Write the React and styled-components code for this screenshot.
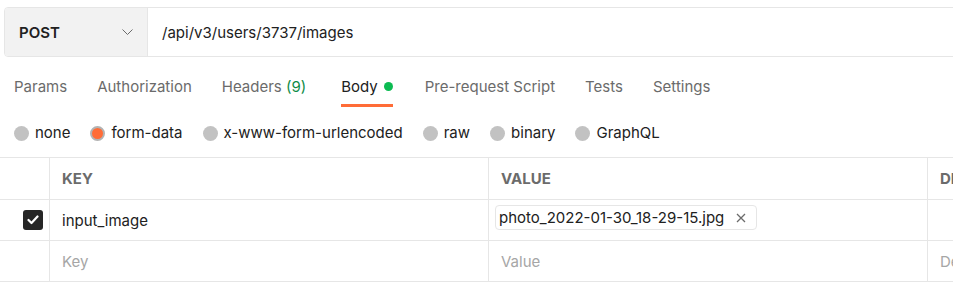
import React from 'react';
import styled, { createGlobalStyle } from 'styled-components';

const GlobalStyle = createGlobalStyle`
  body {
    margin: 0;
    background: #ffffff;
    font-family: Inter, "Noto Sans", sans-serif;
    color: #212121;
    overflow: hidden;
  }
`;

const Page = styled.div`
  width: 953px;
  height: 294px;
  overflow: hidden;
`;

const UrlBar = styled.div`
  display: flex;
  width: 1100px;
  height: 48px;
  margin: 7px 0 0 4px;
  border: 1px solid #e6e6e6;
  border-radius: 4px;
  overflow: hidden;
`;

const MethodSelect = styled.div`
  display: flex;
  align-items: center;
  justify-content: space-between;
  width: 143px;
  padding: 0 14px 0 14px;
  box-sizing: border-box;
  background: #f2f2f2;
  border-right: 1px solid #e6e6e6;
  font-size: 15px;
  font-weight: 600;
  color: #212121;
`;

const UrlInput = styled.div`
  display: flex;
  align-items: center;
  padding-left: 14px;
  font-size: 15px;
  color: #212121;
`;

const Tabs = styled.div`
  display: flex;
  gap: 30px;
  padding-left: 14px;
  margin-top: 12px;
`;

const Tab = styled.div`
  display: flex;
  align-items: center;
  gap: 6px;
  height: 35px;
  margin: ${({ active }) => (active ? '0 2px 0 5px' : '0')};
  font-size: 15px;
  color: ${({ active }) => (active ? '#212121' : '#6b6b6b')};
  border-bottom: 3px solid ${({ active }) => (active ? '#ff6c37' : 'transparent')};
`;

const Count = styled.span`
  color: #0f8c47;
`;

const Dot = styled.span`
  width: 9px;
  height: 9px;
  border-radius: 50%;
  background: #0cbb52;
`;

const RadioRow = styled.div`
  display: flex;
  align-items: center;
  gap: 20px;
  padding: 16px 0 14px 14px;
  line-height: 20px;
`;

const RadioOption = styled.label`
  display: flex;
  align-items: center;
  gap: 6px;
  font-size: 15px;
  color: #212121;
`;

const RadioCircle = styled.span`
  width: 15px;
  height: 15px;
  border-radius: 50%;
  box-sizing: border-box;
  background: ${({ checked }) => (checked ? '#ff6c37' : '#c2c2c2')};
  border: ${({ checked }) => (checked ? '2px solid #b3b3b3' : 'none')};
`;

const Table = styled.div`
  display: grid;
  grid-template-columns: 49px 439px 439px 300px;
  width: 1227px;
  border-top: 1px solid #e6e6e6;
`;

const Cell = styled.div`
  display: flex;
  align-items: ${({ top }) => (top ? 'flex-start' : 'center')};
  height: 41px;
  box-sizing: border-box;
  padding: ${({ top }) => (top ? '5px 6px 0' : '0 12px')};
  border-bottom: 1px solid #e6e6e6;
  border-left: ${({ first }) => (first ? 'none' : '1px solid #e6e6e6')};
  font-size: 15px;
  color: ${({ placeholder }) => (placeholder ? '#a6a6a6' : '#212121')};
  justify-content: ${({ center }) => (center ? 'flex-end' : 'flex-start')};
`;

const HeadCell = styled(Cell)`
  font-weight: 700;
  color: #6b6b6b;
  height: 42px;
`;

const CheckBox = styled.span`
  display: flex;
  align-items: center;
  justify-content: center;
  width: 20px;
  height: 20px;
  border-radius: 3px;
  background: #262626;
  margin-right: -6px;
`;

const FileChip = styled.div`
  display: flex;
  align-items: center;
  gap: 12px;
  height: 25px;
  box-sizing: border-box;
  padding: 0 10px 0 3px;
  border: 1px solid #e6e6e6;
  border-radius: 4px;
  font-size: 15px;
  color: #212121;
`;

const Chevron = () => (
  <svg width="11" height="6" viewBox="0 0 11 6" fill="none">
    <path d="M0.5 0.5 L5.5 5.5 L10.5 0.5" stroke="#6b6b6b" strokeWidth="1" />
  </svg>
);

const Check = () => (
  <svg width="12" height="10" viewBox="0 0 12 10" fill="none">
    <path d="M1.5 5 L4.5 8 L10.5 1.5" stroke="#ffffff" strokeWidth="2.2" strokeLinecap="round" strokeLinejoin="round" />
  </svg>
);

const Close = () => (
  <svg width="10" height="10" viewBox="0 0 10 10" fill="none">
    <path d="M1 1 L9 9 M9 1 L1 9" stroke="#6b6b6b" strokeWidth="1.3" />
  </svg>
);

const bodyTypes = ['none', 'form-data', 'x-www-form-urlencoded', 'raw', 'binary', 'GraphQL'];

export default function App() {
  return (
    <Page>
      <GlobalStyle />
      <UrlBar>
        <MethodSelect>
          POST
          <Chevron />
        </MethodSelect>
        <UrlInput>/api/v3/users/3737/images</UrlInput>
      </UrlBar>

      <Tabs>
        <Tab>Params</Tab>
        <Tab>Authorization</Tab>
        <Tab>
          <span>
            Headers <Count>(9)</Count>
          </span>
        </Tab>
        <Tab active>
          Body <Dot />
        </Tab>
        <Tab>Pre-request Script</Tab>
        <Tab>Tests</Tab>
        <Tab>Settings</Tab>
      </Tabs>

      <RadioRow>
        {bodyTypes.map((t) => (
          <RadioOption key={t}>
            <RadioCircle checked={t === 'form-data'} />
            {t}
          </RadioOption>
        ))}
      </RadioRow>

      <Table>
        <HeadCell first />
        <HeadCell>KEY</HeadCell>
        <HeadCell>VALUE</HeadCell>
        <HeadCell>DESCRIPTION</HeadCell>

        <Cell first center>
          <CheckBox>
            <Check />
          </CheckBox>
        </Cell>
        <Cell>input_image</Cell>
        <Cell top>
          <FileChip>
            photo_2022-01-30_18-29-15.jpg
            <Close />
          </FileChip>
        </Cell>
        <Cell />

        <Cell first />
        <Cell placeholder>Key</Cell>
        <Cell placeholder>Value</Cell>
        <Cell placeholder>Description</Cell>
      </Table>
    </Page>
  );
}
